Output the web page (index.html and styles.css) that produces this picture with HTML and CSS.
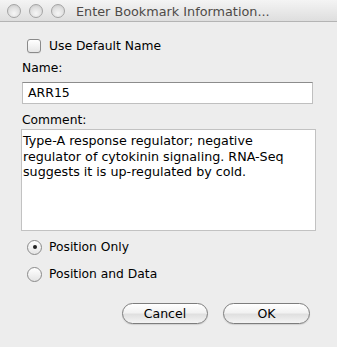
FILE: index.html
```html
<!DOCTYPE html>
<html>
<head>
<meta charset="utf-8">
<link rel="stylesheet" href="styles.css">
</head>
<body>
<div class="window">
  <div class="titlebar">
    <div class="lights">
      <span class="light"></span>
      <span class="light"></span>
      <span class="light"></span>
    </div>
    <div class="title">Enter Bookmark Information...</div>
  </div>
  <div class="content">
    <div class="row check-row">
      <span class="checkbox"></span>
      <span>Use Default Name</span>
    </div>
    <div class="label">Name:</div>
    <div class="field">ARR15</div>
    <div class="label label-comment">Comment:</div>
    <div class="textarea">Type-A response regulator; negative regulator of cytokinin signaling. RNA-Seq suggests it is up-regulated by cold.</div>
    <div class="row radio-row first">
      <span class="radio checked"><span class="dot"></span></span>
      <span>Position Only</span>
    </div>
    <div class="row radio-row second">
      <span class="radio"></span>
      <span>Position and Data</span>
    </div>
    <div class="buttons">
      <div class="button cancel">Cancel</div>
      <div class="button ok">OK</div>
    </div>
  </div>
</div>
</body>
</html>
```
FILE: styles.css
```css
html, body {
  margin: 0;
  padding: 0;
  background: #ededed;
}
body {
  font-family: "DejaVu Sans", sans-serif;
  font-size: 12px;
  color: #000;
}
.window {
  width: 337px;
  height: 347px;
  background: #ededed;
  overflow: hidden;
}
.titlebar {
  height: 21px;
  border-bottom: 1px solid #b4b4b4;
  background: linear-gradient(#f4f4f4, #dedede);
  display: flex;
  align-items: center;
  padding-left: 7px;
}
.lights {
  display: flex;
  gap: 8px;
  padding-top: 1px;
}
.light {
  width: 12px;
  height: 12px;
  border-radius: 50%;
  border: 1px solid #a4a4a4;
  background: radial-gradient(circle at 50% 70%, #f6f6f6 0%, #e0e0e0 55%, #c4c4c4 100%);
  box-sizing: content-box;
}
.title {
  margin-left: 11px;
  font-size: 12.8px;
  color: #4e4a47;
  padding-top: 1px;
}
.content {
  padding: 16px 0 0 21px;
  display: flex;
  flex-direction: column;
}
.row {
  display: flex;
  align-items: center;
  height: 16px;
  font-size: 12.3px;
}
.check-row {
  padding-left: 6px;
}
.checkbox {
  width: 12px;
  height: 12px;
  border: 1px solid #8a8a8a;
  border-radius: 3px;
  background: linear-gradient(#ffffff, #e6e6e6);
  margin-right: 8px;
  box-shadow: 0 1px 0 rgba(0,0,0,0.05);
}
.label {
  height: 16px;
  line-height: 16px;
  margin-top: 6px;
  font-size: 12.3px;
  padding-left: 1px;
}
.label-comment {
  margin-top: 8px;
}
.field {
  margin-top: 6px;
  margin-left: 1px;
  width: 291px;
  height: 22px;
  box-sizing: border-box;
  background: #fff;
  border: 1px solid #bfbfbf;
  border-top-color: #8c8c8c;
  padding-left: 5px;
  line-height: 20px;
  font-size: 12.5px;
}
.textarea {
  margin-top: 1px;
  width: 295px;
  height: 102px;
  box-sizing: border-box;
  background: #fff;
  border: 1px solid #c2c2c2;
  padding: 3px 6px 0 1px;
  line-height: 15.5px;
  font-size: 12.7px;
}
.radio-row {
  padding-left: 6px;
}
.radio-row.first {
  margin-top: 8px;
}
.radio-row.second {
  margin-top: 11px;
}
.radio {
  width: 13px;
  height: 13px;
  border-radius: 50%;
  border: 1px solid #8a8a8a;
  background: linear-gradient(#ffffff, #e4e4e4);
  margin-right: 7px;
  display: flex;
  align-items: center;
  justify-content: center;
}
.dot {
  width: 4px;
  height: 4px;
  border-radius: 50%;
  background: #222;
}
.buttons {
  margin-top: 21px;
  display: flex;
  justify-content: flex-end;
  gap: 15px;
  padding-right: 27px;
}
.button {
  height: 21px;
  box-sizing: border-box;
  border: 1px solid #7d7d7d;
  border-radius: 11px;
  background: linear-gradient(#ffffff 0%, #f2f2f2 45%, #e0e0e0 55%, #f4f4f4 100%);
  text-align: center;
  line-height: 19px;
  font-size: 12.5px;
  box-shadow: 0 1px 1px rgba(0,0,0,0.12);
}
.cancel {
  width: 86px;
}
.ok {
  width: 87px;
}
```
